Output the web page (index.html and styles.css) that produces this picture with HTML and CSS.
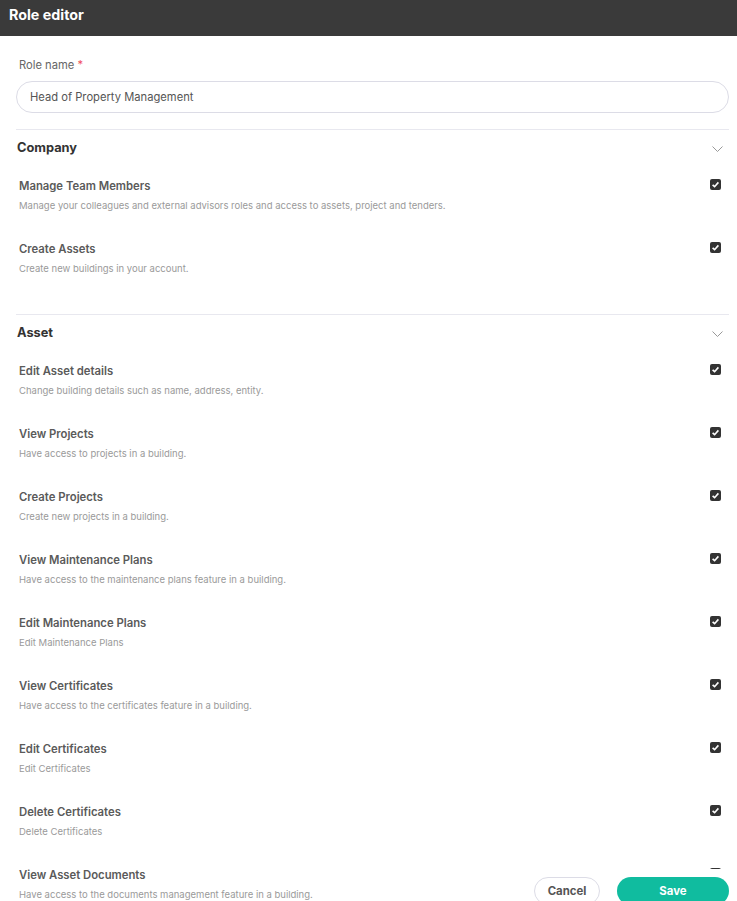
FILE: index.html
```html
<!DOCTYPE html>
<html lang="en">
<head>
<meta charset="UTF-8">
<meta name="viewport" content="width=device-width, initial-scale=1.0">
<title>Role editor</title>
<link rel="stylesheet" href="styles.css">
</head>
<body>
<div class="topbar">Role editor</div>

<div class="editor">
  <label class="field-label" for="roleName">Role name <span class="required">*</span></label>
  <input class="field-input" id="roleName" type="text" value="Head of Property Management">

  <div class="section section-company">
    <div class="section-head">
      <span>Company</span>
      <svg class="chevron" width="11" height="6" viewBox="0 0 11 6"><path d="M0.5 0.5 L5.5 5.5 L10.5 0.5" fill="none" stroke="#999" stroke-width="1"/></svg>
    </div>
    <div class="perm">
      <div class="perm-text">
        <div class="perm-title">Manage Team Members</div>
        <div class="perm-desc">Manage your colleagues and external advisors roles and access to assets, project and tenders.</div>
      </div>
      <span class="check"><svg width="11" height="11" viewBox="0 0 11 11"><path d="M2.6 5.8 L4.6 7.7 L8.4 3.4" fill="none" stroke="#fff" stroke-width="1.6"/></svg></span>
    </div>
    <div class="perm">
      <div class="perm-text">
        <div class="perm-title">Create Assets</div>
        <div class="perm-desc">Create new buildings in your account.</div>
      </div>
      <span class="check"><svg width="11" height="11" viewBox="0 0 11 11"><path d="M2.6 5.8 L4.6 7.7 L8.4 3.4" fill="none" stroke="#fff" stroke-width="1.6"/></svg></span>
    </div>
  </div>

  <div class="section">
    <div class="section-head">
      <span>Asset</span>
      <svg class="chevron" width="11" height="6" viewBox="0 0 11 6"><path d="M0.5 0.5 L5.5 5.5 L10.5 0.5" fill="none" stroke="#999" stroke-width="1"/></svg>
    </div>
    <div class="perm">
      <div class="perm-text">
        <div class="perm-title">Edit Asset details</div>
        <div class="perm-desc">Change building details such as name, address, entity.</div>
      </div>
      <span class="check"><svg width="11" height="11" viewBox="0 0 11 11"><path d="M2.6 5.8 L4.6 7.7 L8.4 3.4" fill="none" stroke="#fff" stroke-width="1.6"/></svg></span>
    </div>
    <div class="perm">
      <div class="perm-text">
        <div class="perm-title">View Projects</div>
        <div class="perm-desc">Have access to projects in a building.</div>
      </div>
      <span class="check"><svg width="11" height="11" viewBox="0 0 11 11"><path d="M2.6 5.8 L4.6 7.7 L8.4 3.4" fill="none" stroke="#fff" stroke-width="1.6"/></svg></span>
    </div>
    <div class="perm">
      <div class="perm-text">
        <div class="perm-title">Create Projects</div>
        <div class="perm-desc">Create new projects in a building.</div>
      </div>
      <span class="check"><svg width="11" height="11" viewBox="0 0 11 11"><path d="M2.6 5.8 L4.6 7.7 L8.4 3.4" fill="none" stroke="#fff" stroke-width="1.6"/></svg></span>
    </div>
    <div class="perm">
      <div class="perm-text">
        <div class="perm-title">View Maintenance Plans</div>
        <div class="perm-desc">Have access to the maintenance plans feature in a building.</div>
      </div>
      <span class="check"><svg width="11" height="11" viewBox="0 0 11 11"><path d="M2.6 5.8 L4.6 7.7 L8.4 3.4" fill="none" stroke="#fff" stroke-width="1.6"/></svg></span>
    </div>
    <div class="perm">
      <div class="perm-text">
        <div class="perm-title">Edit Maintenance Plans</div>
        <div class="perm-desc">Edit Maintenance Plans</div>
      </div>
      <span class="check"><svg width="11" height="11" viewBox="0 0 11 11"><path d="M2.6 5.8 L4.6 7.7 L8.4 3.4" fill="none" stroke="#fff" stroke-width="1.6"/></svg></span>
    </div>
    <div class="perm">
      <div class="perm-text">
        <div class="perm-title">View Certificates</div>
        <div class="perm-desc">Have access to the certificates feature in a building.</div>
      </div>
      <span class="check"><svg width="11" height="11" viewBox="0 0 11 11"><path d="M2.6 5.8 L4.6 7.7 L8.4 3.4" fill="none" stroke="#fff" stroke-width="1.6"/></svg></span>
    </div>
    <div class="perm">
      <div class="perm-text">
        <div class="perm-title">Edit Certificates</div>
        <div class="perm-desc">Edit Certificates</div>
      </div>
      <span class="check"><svg width="11" height="11" viewBox="0 0 11 11"><path d="M2.6 5.8 L4.6 7.7 L8.4 3.4" fill="none" stroke="#fff" stroke-width="1.6"/></svg></span>
    </div>
    <div class="perm">
      <div class="perm-text">
        <div class="perm-title">Delete Certificates</div>
        <div class="perm-desc">Delete Certificates</div>
      </div>
      <span class="check"><svg width="11" height="11" viewBox="0 0 11 11"><path d="M2.6 5.8 L4.6 7.7 L8.4 3.4" fill="none" stroke="#fff" stroke-width="1.6"/></svg></span>
    </div>
    <div class="perm">
      <div class="perm-text">
        <div class="perm-title">View Asset Documents</div>
        <div class="perm-desc">Have access to the documents management feature in a building.</div>
      </div>
      <span class="check"><svg width="11" height="11" viewBox="0 0 11 11"><path d="M2.6 5.8 L4.6 7.7 L8.4 3.4" fill="none" stroke="#fff" stroke-width="1.6"/></svg></span>
    </div>
  </div>
</div>

<div class="footer">
  <button class="btn btn-cancel">Cancel</button>
  <button class="btn btn-save">Save</button>
</div>
</body>
</html>
```

FILE: styles.css
```css
body {
  margin: 0;
  font-family: Inter, "Noto Sans", sans-serif;
  background-color: #fff;
  color: #555;
}

.topbar {
  height: 36px;
  line-height: 29px;
  padding-left: 9px;
  background-color: #3a3a3a;
  color: #fff;
  font-size: 14.3px;
  font-weight: 700;
}

.editor {
  padding: 21px 8px 0 16px;
}

.field-label {
  display: block;
  padding-left: 3px;
  font-size: 11.2px;
  line-height: 16px;
  color: #666;
  margin-bottom: 8px;
}

.required {
  color: #f0505a;
}

.field-input {
  display: block;
  box-sizing: border-box;
  width: 100%;
  height: 32px;
  padding: 0 13px;
  border: 1px solid #dcdce6;
  border-radius: 16px;
  font-family: inherit;
  font-size: 11.2px;
  color: #555;
  outline: none;
  margin-bottom: 16px;
}

.section {
  border-top: 1px solid #e8e8ef;
}

.section-company {
  padding-bottom: 23px;
}

.section-head {
  display: flex;
  justify-content: space-between;
  align-items: center;
  height: 35px;
  padding: 0 6px 0 1px;
  font-size: 12.8px;
  font-weight: 700;
  color: #333;
}

.chevron {
  display: block;
  margin-top: 2px;
}

.perm {
  display: flex;
  justify-content: space-between;
  align-items: flex-start;
  height: 63px;
  box-sizing: border-box;
  padding: 12px 8px 0 3px;
}

.perm-title {
  font-size: 11.3px;
  line-height: 18px;
  font-weight: 600;
  color: #5a5a5a;
}

.perm-desc {
  font-size: 9.5px;
  line-height: 14px;
  color: #9a9a9a;
  margin-top: 4px;
}

.check {
  display: block;
  width: 11px;
  height: 11px;
  margin-top: 2px;
  border-radius: 2px;
  background-color: #333;
}

.check svg {
  display: block;
}

.footer {
  position: fixed;
  right: 8px;
  bottom: -4px;
  display: flex;
  gap: 17px;
  padding: 8px 0 0 14px;
  background-color: #fff;
}

.btn {
  height: 28px;
  border-radius: 14px;
  font-family: inherit;
  font-size: 11.4px;
  font-weight: 700;
  cursor: pointer;
}

.btn-cancel {
  width: 66px;
  border: 1px solid #dcdce6;
  background-color: #fff;
  color: #555;
}

.btn-save {
  width: 112px;
  border: none;
  background-color: #10bc9f;
  color: #fff;
}
```
